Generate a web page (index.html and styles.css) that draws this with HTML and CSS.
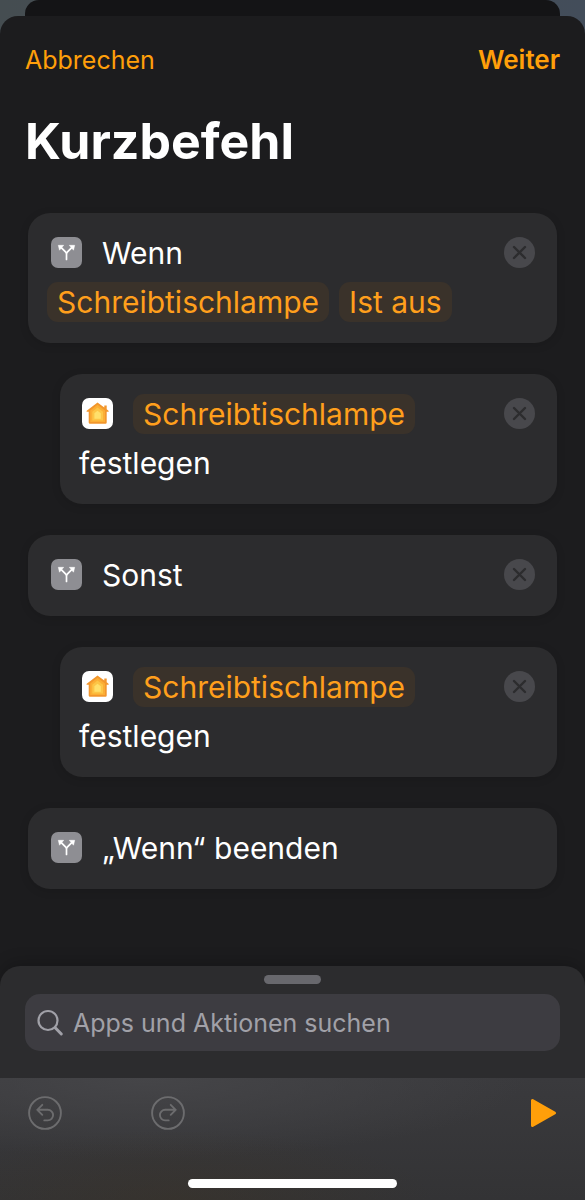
FILE: index.html
```html
<!DOCTYPE html>
<html lang="de">
<head>
<meta charset="utf-8">
<meta name="viewport" content="width=device-width, initial-scale=1">
<title>Kurzbefehl</title>
<link rel="stylesheet" href="styles.css">
</head>
<body>
<svg class="defs" aria-hidden="true">
  <symbol id="branch" viewBox="0 0 31 31">
    <path d="M15.500 22.500V17.200Q15.500 15.800 14.500 14.800L10.500 10.800M15.500 17.200Q15.500 15.800 16.500 14.800L20.500 10.800" fill="none" stroke="#fff" stroke-width="1.700" stroke-linecap="round"/>
    <path d="M7.300 8.300H12.700L8.500 13.200ZM23.700 8.300H18.300L22.500 13.200Z" fill="#fff" stroke="#fff" stroke-width=".5" stroke-linejoin="round"/>
  </symbol>
  <symbol id="home" viewBox="0 0 31 31">
    <path d="M15.500 4.500L4.700 12.700Q4 13.500 5 13.700H6.700V24.500Q6.700 25.700 8 25.700H23.500Q24.700 25.700 24.700 24.500V13.700H26.300Q27.300 13.500 26.500 12.700L24.700 11.300V7.500H22.300V9.500Z" fill="#f2962c"/>
    <path d="M15.500 6.800L8.300 12.400V24H23V12.400Z" fill="#fbae35"/>
    <path d="M15.500 9.600L10.300 13.800V22.500H21V13.800Z" fill="#fdc546"/>
    <path d="M15.500 12.700L12.400 15.200V20.800H18.800V15.200Z" fill="#ffe06b"/>
  </symbol>
  <symbol id="cross" viewBox="0 0 31 31">
    <path d="M10 10L21 21M21 10L10 21" fill="none" stroke="#2c2c2e" stroke-width="2.400" stroke-linecap="round"/>
  </symbol>
  <symbol id="undo" viewBox="0 0 34 34">
    <g fill="none" stroke="currentColor" stroke-width="1.900" stroke-linecap="round" stroke-linejoin="round">
      <circle cx="17" cy="17" r="15.900"/>
      <path d="M14.300 8.800L9.300 13.800L14.300 18.800M9.300 13.800H19.800A5.300 5.300 0 0 1 19.800 24.400H16.300"/>
    </g>
  </symbol>
</svg>

<div class="screen">
  <div class="backdrop"><div class="back-sheet"></div></div>
  <div class="sheet">
    <header class="nav">
      <button type="button" class="nav-button">Abbrechen</button>
      <button type="button" class="nav-button nav-next">Weiter</button>
    </header>
    <main class="content">
      <h1 class="title">Kurzbefehl</h1>
      <ul class="actions">
        <li class="card">
          <div class="line">
            <svg class="app-icon app-script"><use href="#branch"/></svg>
            <span class="label">Wenn</span>
            <button type="button" class="remove" aria-label="Entfernen"><svg><use href="#cross"/></svg></button>
          </div>
          <div class="line">
            <button type="button" class="pill">Schreibtischlampe</button>
            <button type="button" class="pill">Ist aus</button>
          </div>
        </li>
        <li class="card nested">
          <div class="line">
            <svg class="app-icon app-home"><use href="#home"/></svg>
            <button type="button" class="pill">Schreibtischlampe</button>
            <button type="button" class="remove" aria-label="Entfernen"><svg><use href="#cross"/></svg></button>
          </div>
          <div class="line"><span class="label">festlegen</span></div>
        </li>
        <li class="card">
          <div class="line">
            <svg class="app-icon app-script"><use href="#branch"/></svg>
            <span class="label">Sonst</span>
            <button type="button" class="remove" aria-label="Entfernen"><svg><use href="#cross"/></svg></button>
          </div>
        </li>
        <li class="card nested">
          <div class="line">
            <svg class="app-icon app-home"><use href="#home"/></svg>
            <button type="button" class="pill">Schreibtischlampe</button>
            <button type="button" class="remove" aria-label="Entfernen"><svg><use href="#cross"/></svg></button>
          </div>
          <div class="line"><span class="label">festlegen</span></div>
        </li>
        <li class="card">
          <div class="line">
            <svg class="app-icon app-script"><use href="#branch"/></svg>
            <span class="label">„Wenn“ beenden</span>
          </div>
        </li>
      </ul>
    </main>
    <section class="drawer">
      <div class="grabber"></div>
      <label class="search">
        <svg class="search-icon" viewBox="0 0 28 28" aria-hidden="true">
          <g fill="none" stroke="currentColor" stroke-linecap="round">
            <circle cx="11" cy="11.500" r="9.500" stroke-width="2.200"/>
            <path d="M18.200 18.800L24.300 25" stroke-width="3"/>
          </g>
        </svg>
        <input class="search-input" type="search" placeholder="Apps und Aktionen suchen" aria-label="Apps und Aktionen suchen">
      </label>
    </section>
    <footer class="toolbar">
      <div class="tools">
        <button type="button" class="tool" aria-label="Widerrufen"><svg><use href="#undo"/></svg></button>
        <button type="button" class="tool redo" aria-label="Wiederholen"><svg><use href="#undo"/></svg></button>
        <button type="button" class="play" aria-label="Ausführen">
          <svg viewBox="0 0 28 30"><path d="M3.500 2.500V27.500L25.500 15Z" fill="#ff9f0a" stroke="#ff9f0a" stroke-width="3" stroke-linejoin="round"/></svg>
        </button>
      </div>
      <div class="home-indicator"></div>
    </footer>
  </div>
</div>
</body>
</html>
```
FILE: styles.css
```css
* {
  box-sizing: border-box;
}

body {
  margin: 0;
  background: #1c1c1e;
  color: #fff;
  font-family: Inter, "Liberation Sans", sans-serif;
}

button {
  margin: 0;
  padding: 0;
  border: 0;
  background: none;
  color: inherit;
  font: inherit;
}

svg {
  display: block;
}

.defs {
  display: none;
}

.screen {
  display: flex;
  flex-direction: column;
  min-height: 100vh;
  background: linear-gradient(90deg, #454d51, #434d5a);
}

.backdrop {
  padding: 0 25px;
}

.back-sheet {
  height: 32px;
  margin-bottom: -16px;
  border-radius: 14px 14px 0 0;
  background: #141416;
}

.sheet {
  display: flex;
  flex: 1;
  flex-direction: column;
  border-radius: 18px 18px 0 0;
  background: #1c1c1e;
}

.nav {
  display: flex;
  align-items: center;
  justify-content: space-between;
  padding: 26px 25px 0;
}

.nav-button {
  color: #ff9f0a;
  font-size: 25px;
  line-height: 36px;
}

.nav-next {
  font-size: 26px;
  font-weight: 600;
}

.content {
  padding: 0 28px 32px;
}

.title {
  margin: 32px 0 40px -3px;
  font-size: 50px;
  font-weight: 700;
  line-height: 63px;
}

.actions {
  display: flex;
  flex-direction: column;
  gap: 31px;
  margin: 0;
  padding: 0;
  list-style: none;
}

.card {
  padding: 15px 22px 17px 19px;
  border-radius: 22px;
  background: #2c2c2e;
  box-shadow: 0 2px 10px rgba(0, 0, 0, 0.12);
  font-size: 30px;
}

.nested {
  margin-left: 32px;
}

.line {
  display: flex;
  align-items: center;
  gap: 10px;
  height: 49px;
}

.app-icon {
  flex: none;
  width: 31px;
  height: 31px;
  margin: 0 10px 0 4px;
  border-radius: 7px;
}

.app-script {
  background: #8e8e93;
}

.nested .app-icon {
  margin-left: 3px;
}

.app-home {
  background: #fff;
}

.pill {
  height: 40px;
  padding: 0 10px;
  border-radius: 11px;
  background: #3a322a;
  color: #ff9f1c;
}

.remove {
  width: 31px;
  height: 31px;
  margin-left: auto;
  border-radius: 50%;
  background: #48484c;
}

.remove svg {
  width: 31px;
  height: 31px;
}

.drawer {
  margin-top: auto;
  padding: 9px 25px 27px;
  border-radius: 20px 20px 0 0;
  background: #2c2c2e;
  box-shadow: 0 -4px 16px rgba(0, 0, 0, 0.2);
}

.grabber {
  width: 57px;
  height: 9px;
  margin: 0 auto 10px;
  border-radius: 5px;
  background: #68686d;
}

.search {
  display: flex;
  align-items: center;
  gap: 8px;
  height: 57px;
  padding: 0 12px;
  border-radius: 15px;
  background: #3d3c41;
  color: #a1a1a8;
}

.search-icon {
  flex: none;
  width: 28px;
  height: 28px;
}

.search-input {
  flex: 1;
  min-width: 0;
  padding: 0;
  border: 0;
  outline: 0;
  background: none;
  color: #fff;
  font: inherit;
  font-size: 25px;
}

.search-input::placeholder {
  color: #a1a1a8;
}

.toolbar {
  padding: 18px 28px 12px;
  background:
    radial-gradient(ellipse 260px 70px at 30% 100%, rgba(60, 50, 35, 0.4), transparent),
    radial-gradient(ellipse 380px 80px at 25% 0, #454548, transparent),
    linear-gradient(#3a3a3d, #333335);
}

.tools {
  display: flex;
  align-items: center;
  gap: 89px;
  margin-bottom: 49px;
}

.tool {
  color: #6c6c6e;
}

.tool svg {
  width: 34px;
  height: 34px;
}

.redo {
  transform: scaleX(-1);
}

.play {
  margin-left: auto;
}

.play svg {
  width: 28px;
  height: 30px;
}

.home-indicator {
  width: 209px;
  height: 9px;
  margin: 0 auto;
  border-radius: 5px;
  background: #fff;
}
```
